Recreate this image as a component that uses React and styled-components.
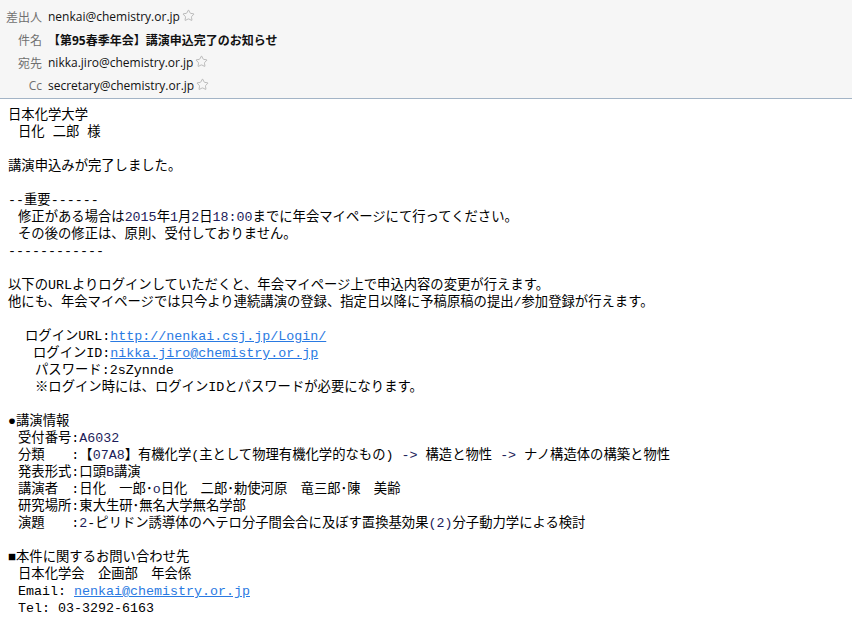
import React from "react";
import styled, { createGlobalStyle } from "styled-components";
import { Star } from "lucide-react";

const Global = createGlobalStyle`
  html, body { margin: 0; padding: 0; background: #fff; }
  body { width: 852px; overflow: hidden; }
`;

const Page = styled.div`
  width: 852px;
  min-height: 642px;
  background: #fff;
`;

const Header = styled.header`
  background: #f6f6f6;
  border-bottom: 1px solid #a3b4c6;
  padding: 5px 0 1px;
  font-family: "Open Sans", "Noto Sans CJK JP", sans-serif;
  font-size: 12px;
`;

const HeaderRow = styled.div`
  display: grid;
  grid-template-columns: 42px 1fr;
  column-gap: 6px;
  align-items: center;
  height: 23px;
`;

const Label = styled.div`
  text-align: right;
  color: #707070;
`;

const Value = styled.div`
  display: flex;
  align-items: center;
  gap: 2px;
  color: #111;
  font-weight: ${(p) => (p.$bold ? 700 : 400)};
`;

const StarIcon = styled(Star)`
  color: #a8a8a8;
  margin-top: -3px;
`;

const Body = styled.main`
  padding: 8px 8px 0;
  font-family: "Liberation Mono", "Noto Sans CJK JP", monospace;
  font-size: 13.33px;
  line-height: 17px;
  color: #000;
`;

const Line = styled.div`
  height: 17px;
  white-space: pre;
  padding-left: ${(p) => p.$indent || 0}px;
`;

const Link = styled.a`
  color: #2a7ae2;
  text-decoration: underline;
`;

const Code = styled.span`
  color: #1c1c5a;
`;

function HeaderField({ label, children, bold, star }) {
  return (
    <HeaderRow>
      <Label>{label}</Label>
      <Value $bold={bold}>
        {children}
        {star && <StarIcon size={13} strokeWidth={1.4} />}
      </Value>
    </HeaderRow>
  );
}

export default function App() {
  return (
    <Page>
      <Global />
      <Header>
        <HeaderField label="差出人" star>nenkai@chemistry.or.jp</HeaderField>
        <HeaderField label="件名" bold>【第95春季年会】講演申込完了のお知らせ</HeaderField>
        <HeaderField label="宛先" star>nikka.jiro@chemistry.or.jp</HeaderField>
        <HeaderField label="Cc" star>secretary@chemistry.or.jp</HeaderField>
      </Header>
      <Body>
        <Line>日本化学大学</Line>
        <Line $indent={10}>日化 二郎 様</Line>
        <Line />
        <Line>講演申込みが完了しました。</Line>
        <Line />
        <Line>--重要------</Line>
        <Line $indent={10}>修正がある場合は<Code>2015</Code>年<Code>1</Code>月<Code>2</Code>日<Code>18:00</Code>までに年会マイページにて行ってください。</Line>
        <Line $indent={10}>その後の修正は、原則、受付しておりません。</Line>
        <Line>------------</Line>
        <Line />
        <Line>以下のURLよりログインしていただくと、年会マイページ上で申込内容の変更が行えます。</Line>
        <Line>他にも、年会マイページでは只今より連続講演の登録、指定日以降に予稿原稿の提出/参加登録が行えます。</Line>
        <Line />
        <Line $indent={17}>ログインURL:<Link href="#">http://nenkai.csj.jp/Login/</Link></Line>
        <Line $indent={25}>ログインID:<Link href="#">nikka.jiro@chemistry.or.jp</Link></Line>
        <Line $indent={27}>パスワード:2sZynnde</Line>
        <Line $indent={27}>※ログイン時には、ログインIDとパスワードが必要になります。</Line>
        <Line />
        <Line>●講演情報</Line>
        <Line $indent={10}>受付番号:<Code>A6032</Code></Line>
        <Line $indent={10}>分類　　:【<Code>07A8</Code>】有機化学(主として物理有機化学的なもの) <Code>-&gt;</Code> 構造と物性 <Code>-&gt;</Code> ナノ構造体の構築と物性</Line>
        <Line $indent={10}>発表形式:口頭<Code>B</Code>講演</Line>
        <Line $indent={10}>講演者　:日化　一郎･<Code>o</Code>日化　二郎･勅使河原　竜三郎･陳　美齢</Line>
        <Line $indent={10}>研究場所:東大生研･無名大学無名学部</Line>
        <Line $indent={10}>演題　　:<Code>2</Code>-ピリドン誘導体のヘテロ分子間会合に及ぼす置換基効果<Code>(2)</Code>分子動力学による検討</Line>
        <Line />
        <Line>■本件に関するお問い合わせ先</Line>
        <Line $indent={10}>日本化学会　企画部　年会係</Line>
        <Line $indent={10}>Email: <Link href="#">nenkai@chemistry.or.jp</Link></Line>
        <Line $indent={10}>Tel: 03-3292-6163</Line>
      </Body>
    </Page>
  );
}
